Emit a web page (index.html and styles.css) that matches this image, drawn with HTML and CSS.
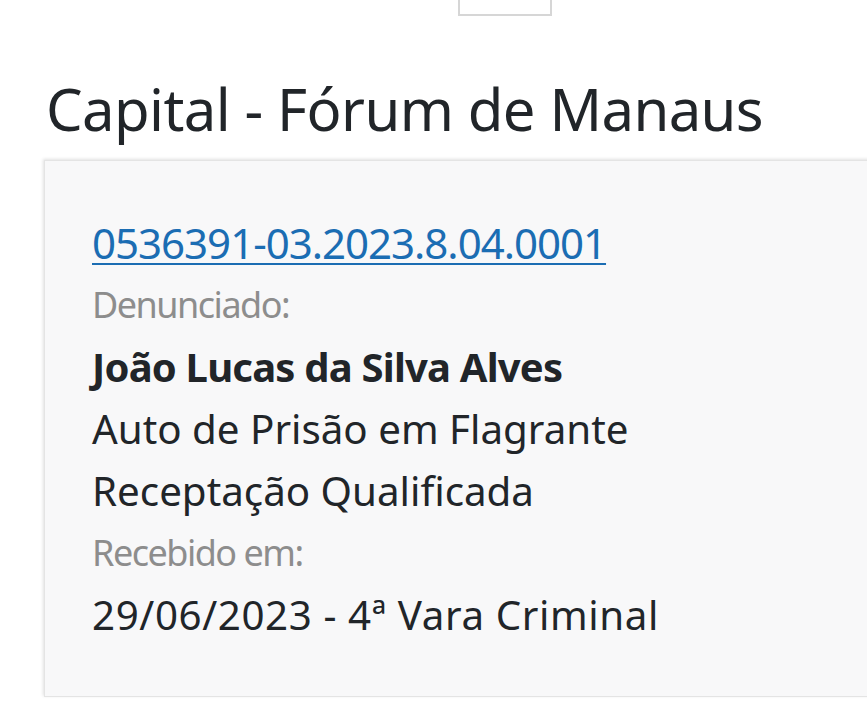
FILE: index.html
```html
<!DOCTYPE html>
<html>
<head lang="pt-BR">
    <meta charset="UTF-8">
    <title>Processos</title>
    <link rel="stylesheet" href="styles.css">
</head>
<body>
<div id="page">
    <div class="tab-stub"></div>
    <h1 class="forum">Capital - Fórum de Manaus</h1>
    <div class="card">
        <a href="#" class="processo">0536391-03.2023.8.04.0001</a>
        <div class="label">Denunciado:</div>
        <div class="nome">João Lucas da Silva Alves</div>
        <div class="info">Auto de Prisão em Flagrante</div>
        <div class="info">Receptação Qualificada</div>
        <div class="label">Recebido em:</div>
        <div class="info data">29/06/2023 - 4ª Vara Criminal</div>
    </div>
</div>
</body>
</html>
```

FILE: styles.css
```css
*{
    margin: 0;
    padding: 0;
}
html,body{
    background: #fff;
    overflow: hidden;
}
body{
    font-family: "Noto Sans", "Open Sans", sans-serif;
    color: #212529;
}
#page{
    width: 867px;
    height: 715px;
    overflow: hidden;
}
.tab-stub{
    width: 90px;
    height: 14px;
    margin-left: 458px;
    border: 2px solid #d6d6d6;
    border-top: none;
    background: #fff;
}
.forum{
    font-size: 58px;
    font-weight: 400;
    line-height: 76px;
    margin: 55px 0 0 46px;
    letter-spacing: -0.6px;
    white-space: nowrap;
}
.card{
    width: 860px;
    margin: 13px 0 0 44px;
    padding: 51px 0 50px 47px;
    background: #f8f8f9;
    border: 1px solid #e4e4e4;
    box-shadow: -1px -1px 3px rgba(0,0,0,0.12);
}
.card > *{
    display: block;
    line-height: 62px;
    white-space: nowrap;
}
.processo{
    font-size: 42px;
    color: #1b6db3;
    text-decoration: underline;
    text-decoration-thickness: 2px;
    text-underline-offset: 4px;
    letter-spacing: -1px;
}
.label{
    font-size: 36px;
    color: #8d8d8d;
    letter-spacing: -1.5px;
}
.nome{
    font-size: 40px;
    font-weight: 700;
    letter-spacing: -0.8px;
}
.info{
    font-size: 40.3px;
}
.data{
    letter-spacing: 0.6px;
}
```
